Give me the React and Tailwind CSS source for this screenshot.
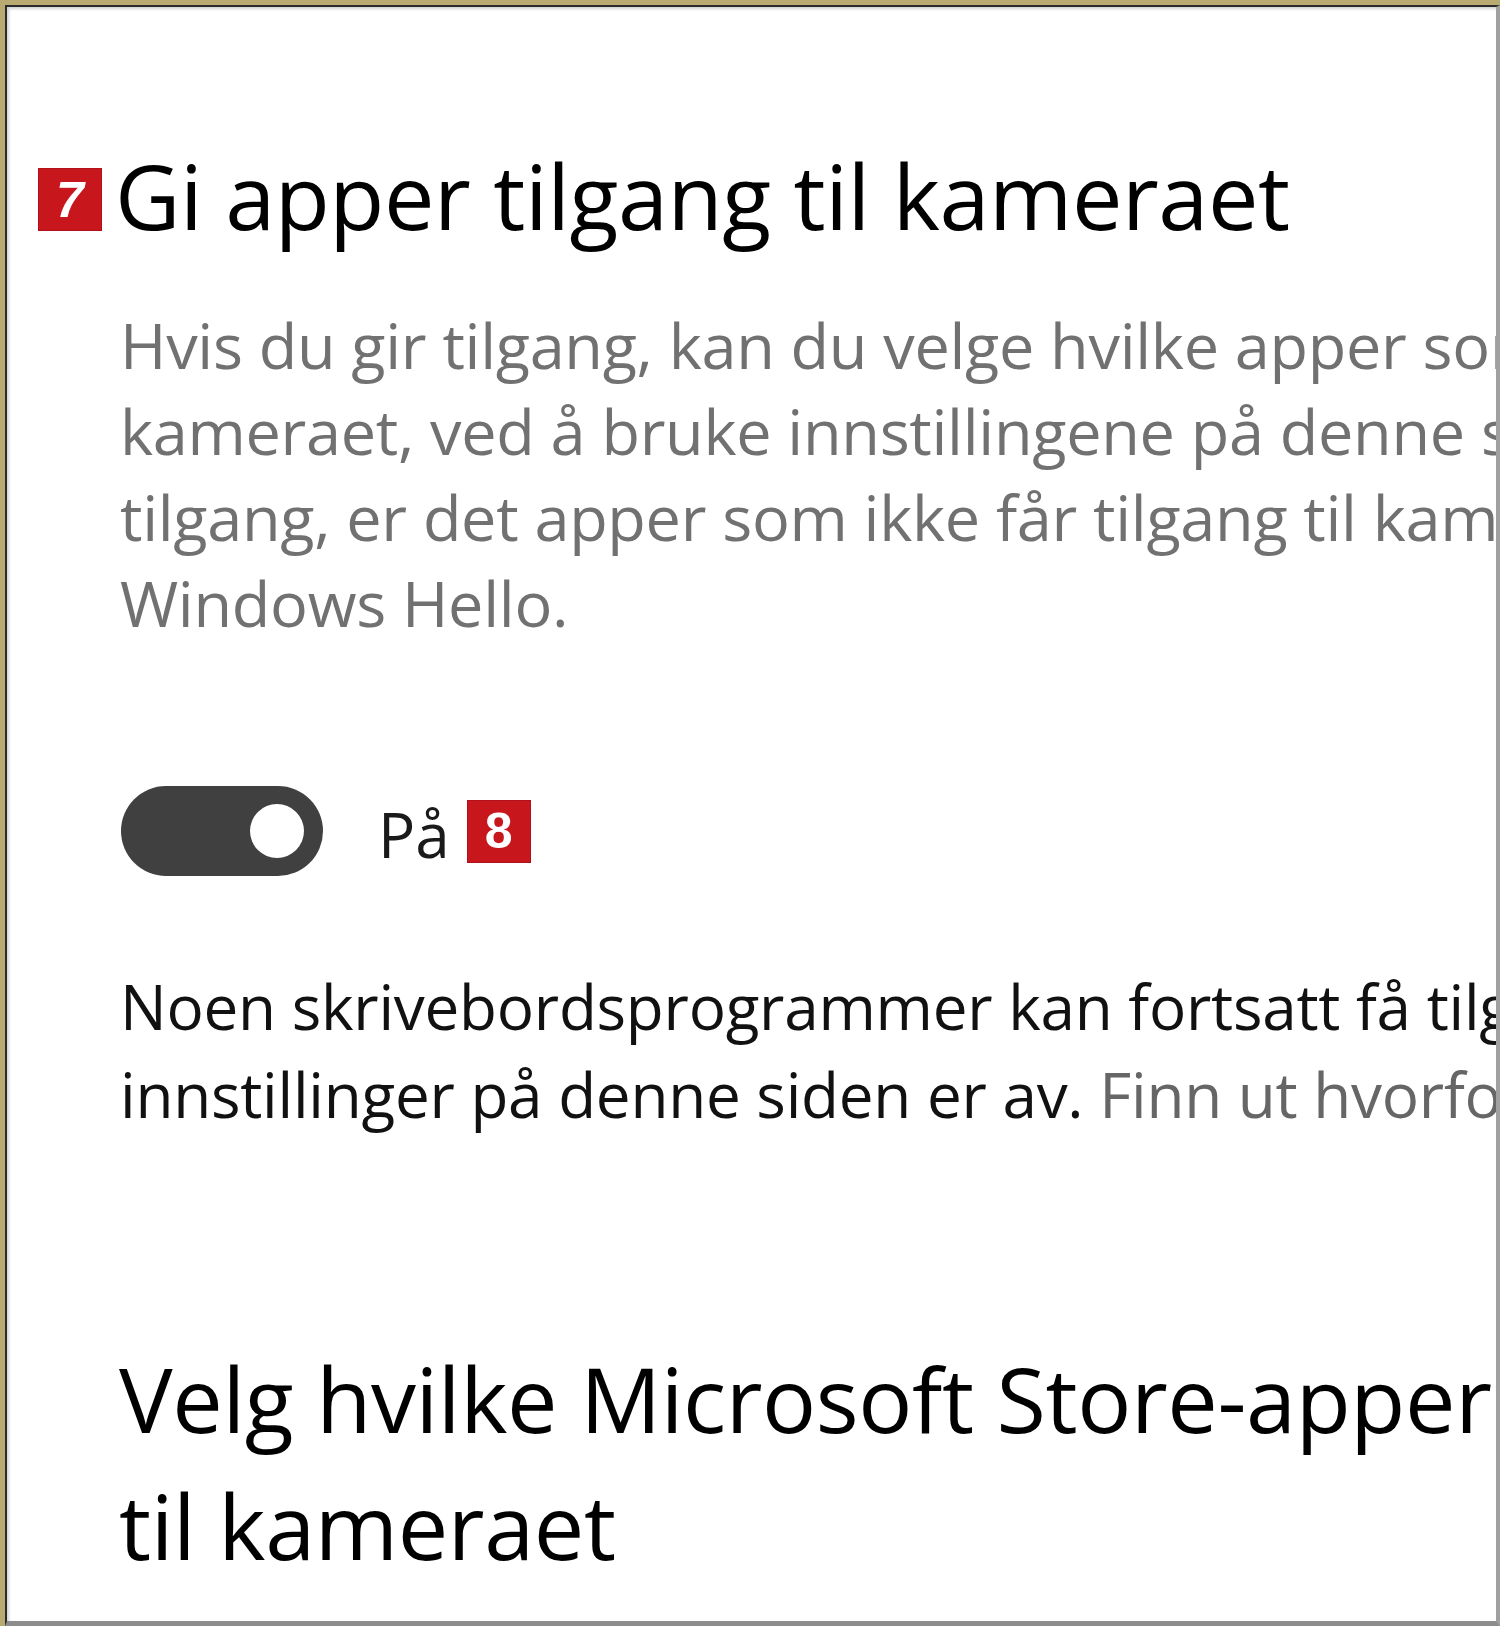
import React from "react";

// numbered callout used in the screenshot annotations
const Badge = ({ n, italic, className = "" }) => (
  <div
    className={`w-[64px] h-[63px] shrink-0 flex items-center justify-center bg-[#c8161d] border border-[#b3111a] text-white font-bold text-[50px] leading-none font-['Liberation_Sans',Arial,sans-serif] ${italic ? "italic" : ""} ${className}`}
  >
    {n}
  </div>
);

const Toggle = () => (
  <div className="w-[202px] h-[90px] rounded-full bg-[#404040] flex items-center justify-end pr-[19px] shrink-0">
    <div className="w-[54px] h-[54px] rounded-full bg-white" />
  </div>
);

const description = [
  "Hvis du gir tilgang, kan du velge hvilke apper som skal ha tilgang til",
  "kameraet, ved å bruke innstillingene på denne siden. Hvis du nekter",
  "tilgang, er det apper som ikke får tilgang til kameraet. Dette gjelder ikke",
  "Windows Hello.",
];

export default function App() {
  return (
    <div className="w-[1500px] h-[1626px] bg-[#b9aa72] pt-[5px] pl-[5px] flex flex-col font-['Open_Sans',sans-serif]">
      <div className="flex-1 min-h-0 bg-white border-t-2 border-l-2 border-t-[#2b2b2b] border-l-[#2b2b2b] border-r-4 border-r-[#a0a0a0] border-b-[5px] border-b-[#8c8c8c] overflow-hidden shadow-[inset_2px_2px_3px_rgba(0,0,0,0.18)]">
        <div className="flex flex-col pl-[31px] pt-[133px]">
          {/* Heading */}
          <div className="flex items-start">
            <Badge n="7" italic className="mt-[28px]" />
            <h1 className="ml-[13px] text-[90px] leading-[110px] tracking-[-0.45px] text-black whitespace-nowrap">
              Gi apper tilgang til kameraet
            </h1>
          </div>

          <div className="pl-[78px] flex flex-col">
            {/* Description */}
            <div className="mt-[52px] ml-[4px] text-[63px] leading-[86px] tracking-[-0.3px] text-[#717171]">
              {description.map((line) => (
                <div key={line} className="whitespace-nowrap">
                  {line}
                </div>
              ))}
            </div>

            {/* Toggle row */}
            <div className="mt-[140px] h-[90px] flex items-center">
              <div className="ml-[5px]">
                <Toggle />
              </div>
              <span className="ml-[55px] text-[62px] leading-[90px] pt-[6px] text-[#1a1a1a]">På</span>
              <Badge n="8" className="ml-[17px]" />
            </div>

            {/* Desktop apps note */}
            <div className="mt-[86px] ml-[4px] text-[62px] leading-[88px] tracking-[-0.25px] text-[#111]">
              <div className="whitespace-nowrap">
                Noen skrivebordsprogrammer kan fortsatt få tilgang til kameraet når
              </div>
              <div className="whitespace-nowrap">
                innstillinger på denne siden er av.{" "}
                <span className="text-[#666]">Finn ut hvorfor</span>
              </div>
            </div>

            {/* Second heading */}
            <h2 className="mt-[197px] ml-[3px] text-[90px] leading-[127px] tracking-[-0.4px] text-black">
              <div className="whitespace-nowrap">Velg hvilke Microsoft Store-apper som kan få tilgang</div>
              <div className="whitespace-nowrap">til kameraet</div>
            </h2>
          </div>
        </div>
      </div>
    </div>
  );
}
